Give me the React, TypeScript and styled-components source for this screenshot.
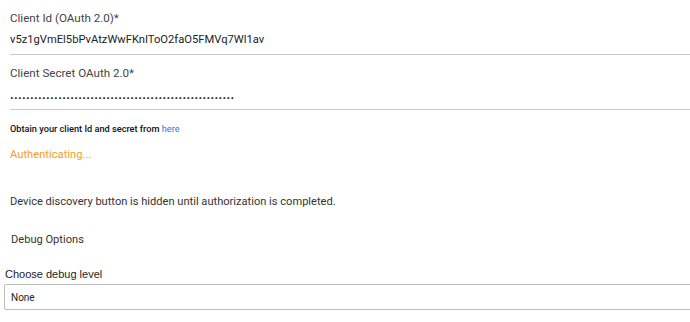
import styled, { createGlobalStyle } from 'styled-components';

const GlobalStyle = createGlobalStyle`
  html, body {
    margin: 0;
    padding: 0;
    background: #fff;
    overflow: hidden;
  }
  body {
    font-family: Roboto, "Liberation Sans", Arial, sans-serif;
    color: #333;
  }
`;

const Page = styled.div`
  display: flex;
  flex-direction: column;
  width: 690px;
  overflow: hidden;
`;

const Field = styled.div<{ $top: number }>`
  display: flex;
  flex-direction: column;
  gap: 4px;
  margin-top: ${(p) => p.$top}px;
  padding-left: 10px;
`;

const FieldLabel = styled.label`
  font-size: 11.6px;
  line-height: 18px;
  color: #444;
`;

const FieldValue = styled.div<{ $secret?: boolean }>`
  font-size: ${(p) => (p.$secret ? '13px' : '11.2px')};
  line-height: 18px;
  color: #222;
  padding-bottom: 5px;
  border-bottom: 1px solid #c8c8c8;
  letter-spacing: ${(p) => (p.$secret ? '0.24px' : '0')};
  font-weight: ${(p) => (p.$secret ? 700 : 400)};
  white-space: nowrap;
  overflow: hidden;
`;

const Hint = styled.p`
  margin: 12px 0 0 10px;
  font-size: 9.2px;
  line-height: 14px;
  font-weight: 500;
  color: #111;

  a {
    color: #3b6fd4;
    font-weight: 400;
    text-decoration: none;
  }
`;

const Status = styled.p`
  margin: 10px 0 0 10px;
  font-size: 11.2px;
  line-height: 18px;
  color: #f5a01e;
`;

const Note = styled.p<{ $top: number; $left: number }>`
  margin: ${(p) => p.$top}px 0 0 ${(p) => p.$left}px;
  font-size: 11.1px;
  line-height: 18px;
  color: #333;
`;

const SelectLabel = styled.label`
  margin: 16px 0 0 5px;
  font-family: "Liberation Sans", Arial, sans-serif;
  font-size: 11px;
  line-height: 18px;
  color: #222;
`;

const Select = styled.div`
  margin: 1px 0 0 4px;
  width: 720px;
  height: 24px;
  box-sizing: content-box;
  border: 1px solid #bdbdbd;
  border-radius: 2px;
  display: flex;
  align-items: center;
  padding-left: 6px;
  font-size: 10px;
  color: #222;
`;

const clientId = 'v5z1gVmEl5bPvAtzWwFKnIToO2faO5FMVq7Wl1av';

export default function App() {
  return (
    <>
      <GlobalStyle />
      <Page>
        <Field $top={9}>
          <FieldLabel>Client Id (OAuth 2.0)*</FieldLabel>
          <FieldValue>{clientId}</FieldValue>
        </Field>
        <Field $top={9}>
          <FieldLabel>Client Secret OAuth 2.0*</FieldLabel>
          <FieldValue $secret>{'.'.repeat(56)}</FieldValue>
        </Field>
        <Hint>
          Obtain your client Id and secret from <a href="#">here</a>
        </Hint>
        <Status>Authenticating...</Status>
        <Note $top={29} $left={10}>
          Device discovery button is hidden until authorization is completed.
        </Note>
        <Note $top={20} $left={11}>
          Debug Options
        </Note>
        <SelectLabel>Choose debug level</SelectLabel>
        <Select>None</Select>
      </Page>
    </>
  );
}
